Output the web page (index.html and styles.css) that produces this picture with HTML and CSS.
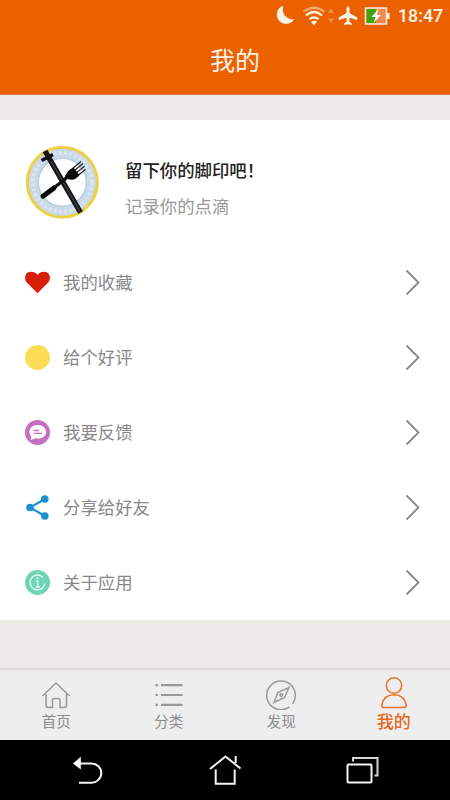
FILE: index.html
```html
<!DOCTYPE html>
<html lang="zh-CN">
<head>
<meta charset="utf-8">
<title>我的</title>
<link rel="stylesheet" href="styles.css">
</head>
<body>
<div class="screen">
  <header class="header">
    <div class="status">
      <svg width="122" height="24" viewBox="272 4 122 24">
        <path d="M281 6.800 A9.300 9.300 0 1 0 294.300 19 Q288.500 19.800 284.800 15.500 Q281.800 11.500 283.300 6.200 Q282 6 281 6.800Z" fill="#fff3e8"/>
        <g fill="none" stroke="#fff3e8" stroke-width="2.200">
          <path d="M303.500 12 Q314 3.500 324.500 12" stroke="#f6a773"/>
          <path d="M306 15.500 Q314 8.500 322 15.500"/>
          <path d="M309.500 19.300 Q314 15.300 318.500 19.300"/>
        </g>
        <path d="M311 21.800 Q314 19.500 317 21.800 L314 25.500Z" fill="#fff3e8"/>
        <path d="M327.800 13 L331 8.500 L334.200 13Z M327.800 18.500 H334.200 L331 23Z" fill="#f28d4c"/>
        <path d="M346.500 8 Q348 4.500 349.500 8 V13 L357.300 17.500 V20 L349.500 17.800 V21.800 L352 23.700 V25 L348 24.200 L344 25 V23.700 L346.500 21.800 V17.800 L338.700 20 V17.500 L346.500 13Z" fill="#fff3e8"/>
        <rect x="365.500" y="8" width="21" height="16" fill="#f08b50" stroke="#ffe9d8" stroke-width="1.500"/>
        <path d="M366.500 9 H376 V23 H366.500Z" fill="#42a40c"/>
        <path d="M387 13 H389.500 V19 H387Z" fill="#fff3e8"/>
        <path d="M378.500 9 L371.500 17 H375.500 L373.500 23 L381 15 H377Z" fill="#fff"/>
      </svg>
      <span class="time">18:47</span>
    </div>
    <h1 class="title">我的</h1>
  </header>

  <main class="card">
    <section class="profile">
      <svg class="avatar" viewBox="25 145 75 75">
        <circle cx="62.300" cy="182.300" r="35" fill="#c9d9e8" stroke="#eed044" stroke-width="3"/>
        <circle cx="62.300" cy="182.300" r="29.500" fill="none" stroke="#d8e4ef" stroke-width="4" stroke-dasharray="3 2.200"/>
        <circle cx="62.300" cy="182.300" r="24" fill="#fcfdff" stroke="#b9cde3" stroke-width="1.500"/>
        <path d="M45 151 L80.500 212.500" stroke="#161616" stroke-width="5.400"/>
        <path d="M51 161 L80 211.500" stroke="#65686b" stroke-width=".7"/>
        <path d="M41.500 160.500 L53 154.500" stroke="#111" stroke-width="3.500"/>
        <path d="M42.500 196.500 L66 178.500" stroke="#080808" stroke-width="3.200"/>
        <path d="M43 196.300 L54 188" stroke="#080808" stroke-width="5" stroke-linecap="round"/>
        <path d="M64 180 Q65.500 171 73.500 167.500 L79.500 175 Q75 181.500 67.500 179Z" fill="#080808"/>
        <path d="M72 169 L81 161.500 M74.500 170.500 L83 163.500 M76.700 172.500 L84.500 166.300 M78.500 175 L85.500 169.500" stroke="#202020" stroke-width="1.200"/>
      </svg>
      <div class="profile-text">
        <div class="name">留下你的脚印吧！</div>
        <div class="sub">记录你的点滴</div>
      </div>
    </section>
    <ul class="menu">
      <li class="row">
        <svg class="icon" viewBox="24 269 27 27"><path d="M37.500 293.300 L26.800 282.500 C23.500 278.500 25 271.800 31 271.800 Q35 271.800 37.500 275 Q40 271.800 44 271.800 C50 271.800 51.500 278.500 48.200 282.500Z" fill="#d81e06"/></svg>
        <span class="label">我的收藏</span>
        <svg class="arrow" viewBox="0 0 16 28"><path d="M1.500 1.500 L13.500 13.500 L1.500 25.500"/></svg>
      </li>
      <li class="row">
        <svg class="icon" viewBox="0 0 27 27"><circle cx="13.500" cy="13.500" r="12.500" fill="#fddc55"/></svg>
        <span class="label">给个好评</span>
        <svg class="arrow" viewBox="0 0 16 28"><path d="M1.500 1.500 L13.500 13.500 L1.500 25.500"/></svg>
      </li>
      <li class="row">
        <svg class="icon" viewBox="0 0 27 27"><circle cx="13.500" cy="13.500" r="12.500" fill="#c46fc2"/><path d="M7 21 L7.200 17.500 C3 12.500 6.500 6 13.500 6 C18.800 6 22 9.300 22 13 C22 17.900 17 20.500 11.800 19.200Z" fill="#fff"/><path d="M9.500 11.500 H15 M9.500 14.300 H18" stroke="#c46fc2" stroke-width="1.300"/></svg>
        <span class="label">我要反馈</span>
        <svg class="arrow" viewBox="0 0 16 28"><path d="M1.500 1.500 L13.500 13.500 L1.500 25.500"/></svg>
      </li>
      <li class="row">
        <svg class="icon" viewBox="0 0 27 27"><path d="M21 5 L6 13.500 L21 22" fill="none" stroke="#1c8fd2" stroke-width="2.200"/><g fill="#1c8fd2"><circle cx="20.800" cy="5" r="3.800"/><circle cx="6" cy="13.500" r="3.800"/><circle cx="20.800" cy="22" r="3.800"/></g></svg>
        <span class="label">分享给好友</span>
        <svg class="arrow" viewBox="0 0 16 28"><path d="M1.500 1.500 L13.500 13.500 L1.500 25.500"/></svg>
      </li>
      <li class="row">
        <svg class="icon" viewBox="0 0 27 27"><circle cx="13.500" cy="13.500" r="12.500" fill="#6fd3b4"/><g fill="none" stroke="#e2fff6" stroke-width="1.300"><path d="M19 8.500 A7.400 7.400 0 1 0 20.800 14.500"/><path d="M12 12 H13.800 V18 M11.800 18 H15.800"/></g><circle cx="13.500" cy="9.500" r="1" fill="#e2fff6"/></svg>
        <span class="label">关于应用</span>
        <svg class="arrow" viewBox="0 0 16 28"><path d="M1.500 1.500 L13.500 13.500 L1.500 25.500"/></svg>
      </li>
    </ul>
  </main>

  <nav class="tabs">
    <div class="tab">
      <svg class="tab-icon" viewBox="40 678 32 32"><path d="M42.500 696 L56 683 L69.500 696 M46 694 V705 Q46 707.500 48.500 707.500 H52.500 V700 Q52.500 698.500 54 698.500 H58.500 Q60 698.500 60 700 V707.500 H64 Q66.500 707.500 66.500 705 V694"/></svg>
      <span>首页</span>
    </div>
    <div class="tab">
      <svg class="tab-icon list" viewBox="153 678 32 32"><path d="M155.500 685.200 H158 M161 685.200 H182.500 M155.500 695 H158 M161 695 H182.500 M155.500 704.800 H158 M161 704.800 H182.500"/></svg>
      <span>分类</span>
    </div>
    <div class="tab">
      <svg class="tab-icon" viewBox="265 678 32 32"><path d="M289.500 706.800 A14.300 14.300 0 1 1 292.500 703.800 M274 702.500 L277.800 692.500 L289 687.500 L284.500 697.500Z"/><circle cx="281.300" cy="695" r="1.300"/></svg>
      <span>发现</span>
    </div>
    <div class="tab active">
      <svg class="tab-icon" viewBox="378 677 32 32"><circle cx="394" cy="685.500" r="7.700"/><path d="M384 707.500 H404 Q406.500 707.500 406.300 705 C405 698.500 400.500 694.700 394 694.700 C387.500 694.700 383 698.500 381.700 705 Q381.500 707.500 384 707.500Z"/></svg>
      <span>我的</span>
    </div>
  </nav>

  <div class="sysbar">
    <svg viewBox="0 740 450 60" width="450" height="60">
      <g fill="none" stroke="#f4f4f4" stroke-width="2">
        <path d="M79 763.500 H91.500 A9.800 9.600 0 0 1 91.500 782.700 H79"/>
        <path d="M210 769 L225.500 756.500 L240.500 768.500 M215.700 769.500 V783.700 H234.700 V769.500 M235.700 756 V763"/>
        <rect x="347.500" y="764.500" width="24" height="18" rx="1"/>
        <path d="M353 761.500 V758 H377.500 V775.500 H374.500" stroke="#d5d5d5"/>
      </g>
      <path d="M73 763.500 L80.800 756.700 V769.500Z" fill="#fff"/>
    </svg>
  </div>
</div>
</body>
</html>
```
FILE: styles.css
```css
* {
  box-sizing: border-box;
}

body {
  margin: 0;
  font-family: "Noto Sans CJK SC", sans-serif;
}

svg {
  display: block;
  flex: none;
}

.screen {
  display: flex;
  flex-direction: column;
  width: 450px;
  height: 800px;
  overflow: hidden;
  background: #ebeae6;
}

.header {
  height: 95px;
  background: #eb6100;
  border-bottom: 1px solid #d9783a;
  color: #fff3e8;
}

.status {
  display: flex;
  align-items: center;
  justify-content: flex-end;
  gap: 4px;
  height: 32px;
  padding-right: 8px;
}

.time {
  width: 44px;
  font: 500 17.800px/24px Roboto, sans-serif;
  white-space: nowrap;
}

.title {
  margin: 8px 0 0;
  padding-left: 20px;
  font-size: 25px;
  font-weight: 400;
  line-height: 38px;
  text-align: center;
}

.card {
  height: 500px;
  margin-top: 25px;
  background: #fff;
}

.profile {
  display: flex;
  height: 125px;
  padding: 25px 0 0 25px;
}

.avatar {
  width: 75px;
  height: 75px;
}

.profile-text {
  padding: 9px 0 0 25px;
}

.name,
.sub {
  height: 36px;
  font-size: 17.400px;
  line-height: 32px;
  white-space: nowrap;
}

.name {
  color: #222;
  font-weight: 500;
}

.sub {
  color: #999;
}

.menu {
  margin: 0;
  padding: 0;
  list-style: none;
}

.row {
  display: flex;
  align-items: center;
  height: 75px;
  padding: 0 29px 0 24px;
}

.icon {
  width: 27px;
  height: 27px;
}

.label {
  flex: 1;
  padding: 0 0 2px 12px;
  color: #888;
  font-size: 17.400px;
  line-height: 26px;
}

.arrow {
  width: 16px;
  height: 28px;
  fill: none;
  stroke: #888;
  stroke-width: 1.800;
}

.tabs {
  display: grid;
  grid-template-columns: repeat(4, 1fr);
  height: 72px;
  margin-top: auto;
  border-top: 2px solid #dcdbd7;
  background: #eee;
  color: #8c8c8c;
}

.tab {
  display: flex;
  flex-direction: column;
  align-items: center;
  padding-top: 8px;
  font-size: 14.500px;
  line-height: 22px;
}

.tab-icon {
  width: 32px;
  height: 32px;
  fill: none;
  stroke: #999;
  stroke-width: 1.500;
}

.tab-icon.list {
  stroke-width: 2.200;
}

.tab.active {
  padding-top: 7px;
  color: #e8671c;
  font-size: 17px;
  font-weight: 500;
  line-height: 24px;
}

.active .tab-icon {
  stroke: #ec7430;
  stroke-width: 1.600;
}

.sysbar {
  height: 60px;
  background: #000;
}
```
